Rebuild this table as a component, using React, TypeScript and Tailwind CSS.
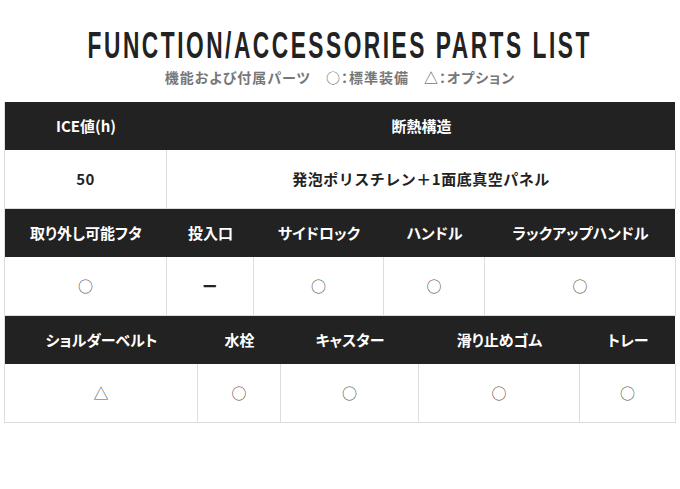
import React, { useLayoutEffect, useRef, useState } from 'react'

const jp = { fontFamily: '"Noto Sans CJK JP", "Noto Sans", sans-serif' }

interface Cell {
  label: string
  value: string
}

const rows: { cols: string; cells: Cell[] }[] = [
  {
    cols: 'grid-cols-[162px_509px]',
    cells: [
      { label: 'ICE値(h)', value: '50' },
      { label: '断熱構造', value: '発泡ポリスチレン＋1面底真空パネル' }
    ]
  },
  {
    cols: 'grid-cols-[162px_87px_130px_101px_191px]',
    cells: [
      { label: '取り外し可能フタ', value: '○' },
      { label: '投入口', value: 'ー' },
      { label: 'サイドロック', value: '○' },
      { label: 'ハンドル', value: '○' },
      { label: 'ラックアップハンドル', value: '○' }
    ]
  },
  {
    cols: 'grid-cols-[193px_83px_138px_161px_96px]',
    cells: [
      { label: 'ショルダーベルト', value: '△' },
      { label: '水栓', value: '○' },
      { label: 'キャスター', value: '○' },
      { label: '滑り止めゴム', value: '○' },
      { label: 'トレー', value: '○' }
    ]
  }
]

// condensed headline: squeeze to the target width
function Headline({ text, width }: { text: string; width: number }) {
  const ref = useRef<HTMLSpanElement>(null)
  const [scale, setScale] = useState(1)

  useLayoutEffect(() => {
    if (ref.current) {
      setScale(width / ref.current.offsetWidth)
    }
  }, [text, width])

  return (
    <div className="flex justify-center h-[40px] overflow-visible">
      <span
        ref={ref}
        className="inline-block whitespace-nowrap text-[36px] leading-[40px] font-bold text-[#222] tracking-[4px]"
        style={{ fontFamily: '"Liberation Sans", Arial, sans-serif', transform: `scaleX(${scale})` }}
      >
        {text}
      </span>
    </div>
  )
}

export default function App() {
  return (
    <div className="w-[680px] h-[489px] bg-white [font-feature-settings:'palt']" style={jp}>
      {/* Title */}
      <div className="pt-[26px] text-center">
        <Headline text="FUNCTION/ACCESSORIES PARTS LIST" width={504} />
        <p className="mt-[1px] text-[14px] leading-[20px] font-bold text-[#777] tracking-[1px]">
          機能および付属パーツ　○：標準装備　△：オプション
        </p>
      </div>

      {/* Parts table */}
      <div className="mt-[15px] ml-[4px] w-[671px] border-l border-[#ddd]">
        {rows.map((row, i) => (
          <div key={i}>
            <div className={`grid ${row.cols} bg-[#222] h-[48px]`}>
              {row.cells.map((c) => (
                <div
                  key={c.label}
                  className="flex items-center justify-center text-[15px] font-bold text-white"
                >
                  {c.label}
                </div>
              ))}
            </div>
            <div className={`grid ${row.cols} h-[59px]`}>
              {row.cells.map((c) => (
                <div
                  key={c.label}
                  className={`flex items-center justify-center border-r border-b border-[#ddd] text-[15px] ${
                    c.value === '○' || c.value === '△'
                      ? 'font-normal text-[#555]'
                      : 'font-bold text-[#222] tracking-[0.5px] [font-feature-settings:normal]'
                  }`}
                >
                  {c.value}
                </div>
              ))}
            </div>
          </div>
        ))}
      </div>
    </div>
  )
}
